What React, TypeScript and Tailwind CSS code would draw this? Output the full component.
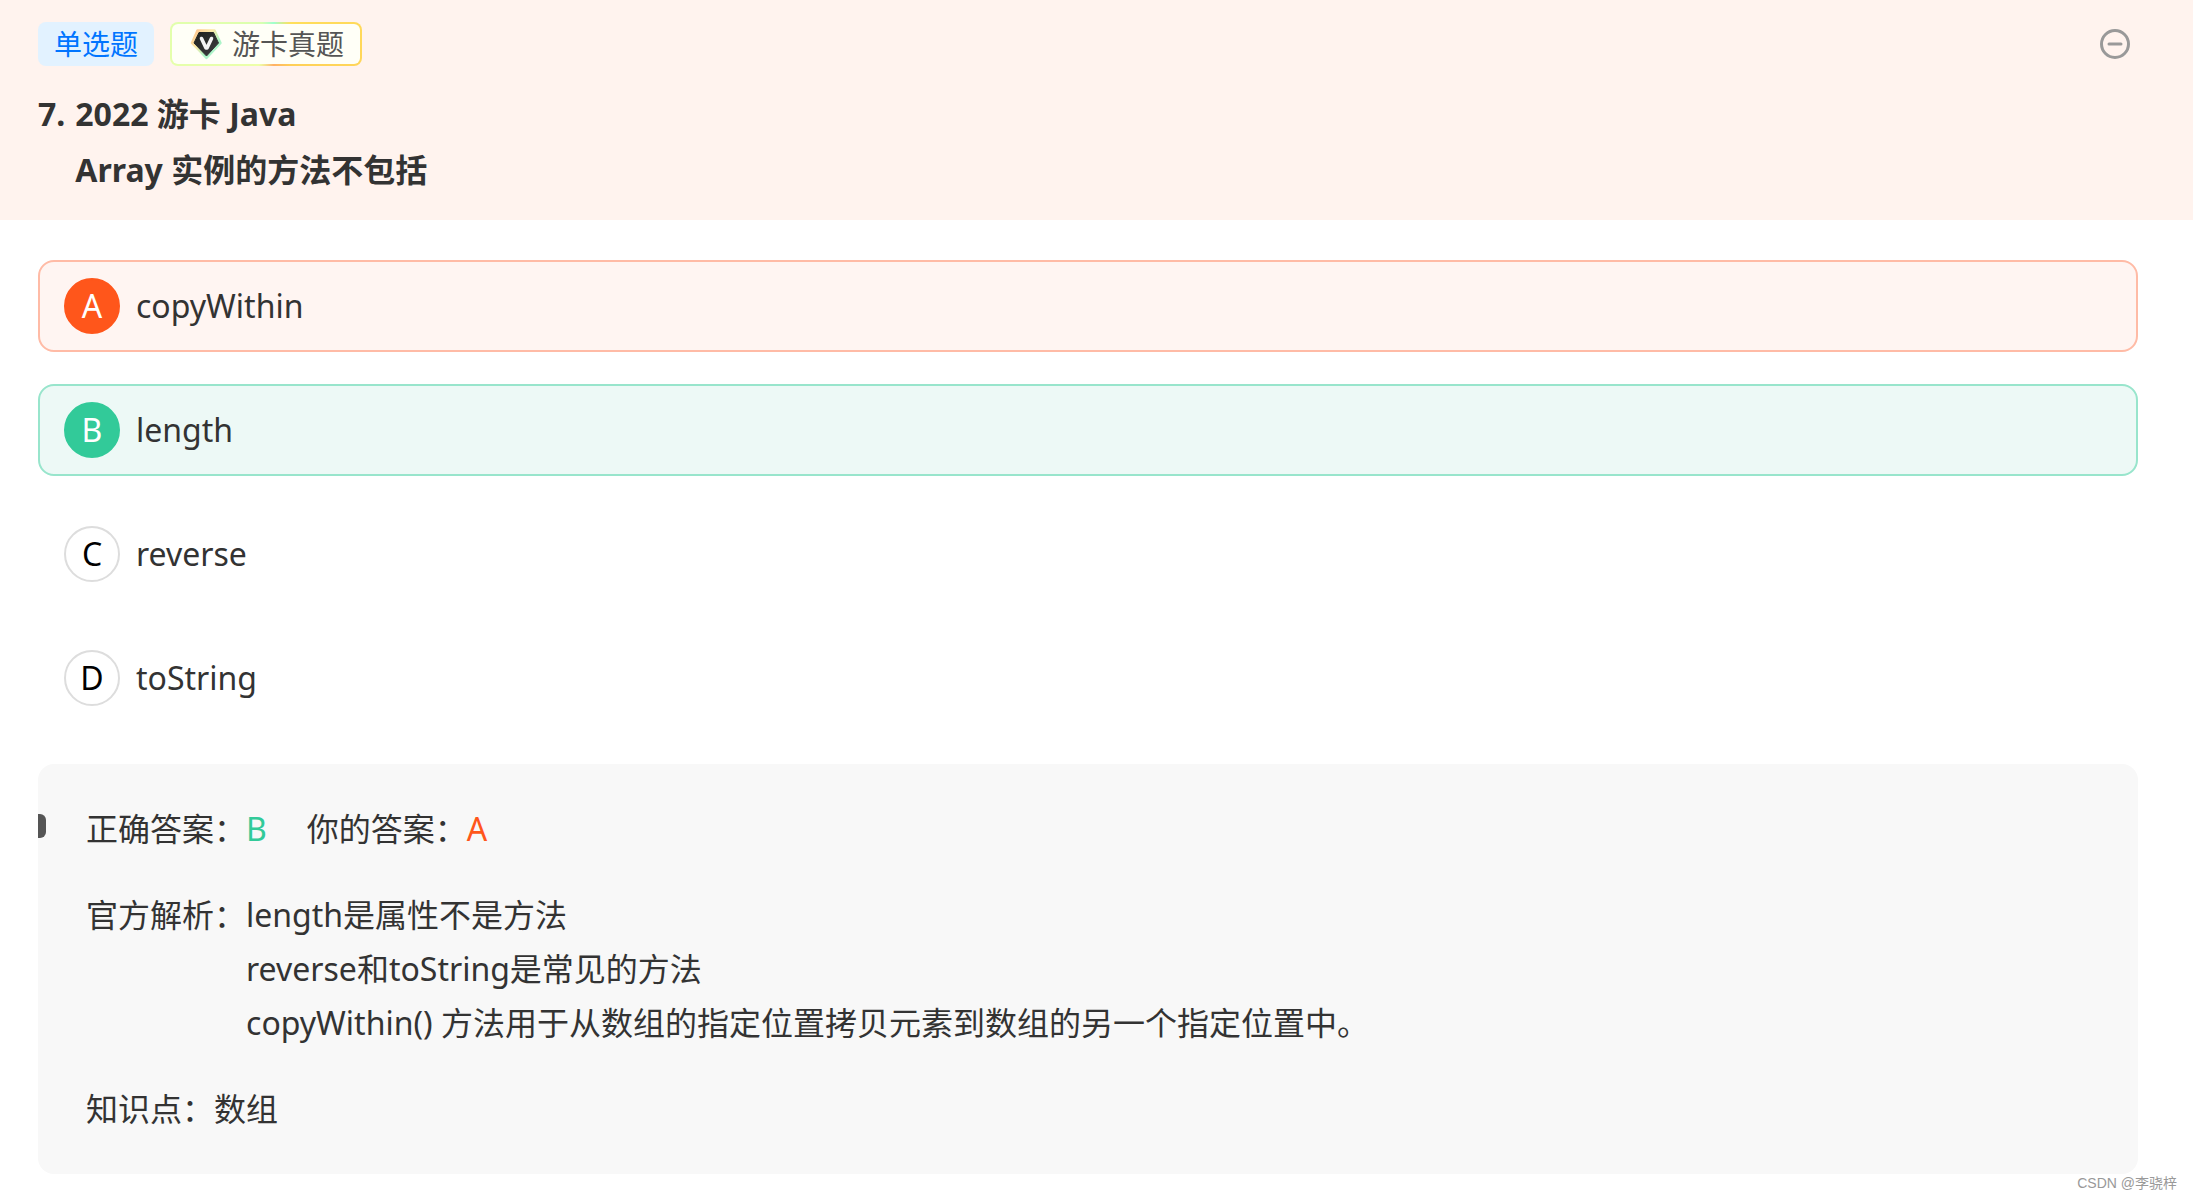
import { useState } from "react";

type Option = {
  key: string;
  text: string;
  row: string;
  badge: string;
};

const options: Option[] = [
  {
    key: "A",
    text: "copyWithin",
    row: "border-[#ffbba6] bg-[#fff5f2]",
    badge: "border-[#ff561b] bg-[#ff561b] text-white",
  },
  {
    key: "B",
    text: "length",
    row: "border-[#98e5cc] bg-[#edf9f6]",
    badge: "border-[#32ca99] bg-[#32ca99] text-white",
  },
  {
    key: "C",
    text: "reverse",
    row: "border-transparent",
    badge: "border-[#dddddd] bg-white text-black",
  },
  {
    key: "D",
    text: "toString",
    row: "border-transparent",
    badge: "border-[#dddddd] bg-white text-black",
  },
];

const explanation = [
  "length是属性不是方法",
  "reverse和toString是常见的方法",
  "copyWithin() 方法用于从数组的指定位置拷贝元素到数组的另一个指定位置中。",
];

function GemIcon() {
  return (
    <svg className="size-8" viewBox="0 0 32 32" fill="none" aria-hidden="true">
      <defs>
        <linearGradient id="gemEdge" x1="4" y1="4" x2="28" y2="28" gradientUnits="userSpaceOnUse">
          <stop offset="0" stopColor="#ffc890" />
          <stop offset="0.35" stopColor="#fbe9a8" />
          <stop offset="0.7" stopColor="#a9f5c4" />
          <stop offset="1" stopColor="#b8f3d8" />
        </linearGradient>
        <linearGradient id="gemBody" x1="6" y1="4" x2="26" y2="28" gradientUnits="userSpaceOnUse">
          <stop offset="0" stopColor="#20221f" />
          <stop offset="1" stopColor="#3b3c3f" />
        </linearGradient>
      </defs>
      <path d="M7.500 2.500h17l6 12.500L16.500 30 2 15z" fill="url(#gemEdge)" stroke="url(#gemEdge)" strokeWidth="2.500" strokeLinejoin="round" />
      <path d="M9 4.500h14.500l5 10.500L16.500 28 4 15z" fill="url(#gemBody)" stroke="url(#gemBody)" strokeLinejoin="round" />
      <path d="M11.500 10.500l4.500 9.500h1L21.500 10.500" stroke="#f4f4f4" strokeWidth="3.600" strokeLinecap="round" strokeLinejoin="round" />
    </svg>
  );
}

function MinusCircle() {
  return (
    <svg className="size-8" viewBox="0 0 32 32" fill="none" stroke="#999999" aria-hidden="true">
      <circle cx="16" cy="16" r="13.500" strokeWidth="3" />
      <path d="M10 16h12" strokeWidth="3" strokeLinecap="round" />
    </svg>
  );
}

export default function App() {
  const [open, setOpen] = useState(true);

  return (
    <main className="relative min-h-screen bg-white pb-6 font-['Noto_Sans','Noto_Sans_CJK_SC',sans-serif] text-[32px] text-[#333333]">
      <header className="bg-[#fff3ee] px-[38px] py-[22px]">
        <div className="flex items-center gap-4 text-[28px] leading-10">
          <span className="flex h-11 items-center rounded-lg bg-[#e2f2ff] px-4 text-[#0075ff]">单选题</span>
          <span className="rounded-lg bg-[conic-gradient(at_54%_50%,#9fffd0_0deg,#ffe05c_40deg,#ffcf57_140deg,#ffb066_180deg,#eeffa8_215deg,#d8ffb0_330deg,#9fffd0_360deg)] p-0.5">
            <span className="flex h-10 items-center gap-2.5 rounded-md bg-[#fffff7] pr-4 pl-[18px] text-[#555555]">
              <GemIcon />
              游卡真题
            </span>
          </span>
          <button
            type="button"
            aria-label="收起"
            aria-expanded={open}
            onClick={() => setOpen(!open)}
            className="mr-6 ml-auto"
          >
            <MinusCircle />
          </button>
        </div>
        <h1 className="mt-5 flex gap-2.5 leading-[56px] font-bold">
          <span>7.</span>
          <span>
            2022 游卡 Java
            <br />
            Array 实例的方法不包括
          </span>
        </h1>
      </header>

      {open && (
        <div className="mr-[55px] ml-[38px]">
          <fieldset aria-label="Array 实例的方法不包括" className="flex flex-col gap-8 pt-10">
            {options.map((o) => (
              <label
                key={o.key}
                className={`relative flex h-[92px] items-center gap-4 rounded-2xl border-2 px-6 ${o.row}`}
              >
                <input type="radio" name="answer" value={o.key} defaultChecked={o.key === "A"} className="sr-only" />
                <span className={`flex size-14 items-center justify-center rounded-full border-2 ${o.badge}`}>
                  {o.key}
                </span>
                <span>{o.text}</span>
              </label>
            ))}
          </fieldset>

          <section className="relative mt-10 flex flex-col gap-8 rounded-2xl bg-[#f8f8f8] px-12 py-[38px] leading-[54px]">
            <span className="absolute top-[50px] left-0 h-6 w-2 rounded-r-md bg-[#555555]" />
            <p className="flex gap-10">
              <span>
                正确答案：<span className="text-[#32ca99]">B</span>
              </span>
              <span>
                你的答案：<span className="text-[#ff561b]">A</span>
              </span>
            </p>
            <div className="flex">
              <span className="shrink-0">官方解析：</span>
              <div>
                {explanation.map((line) => (
                  <p key={line}>{line}</p>
                ))}
              </div>
            </div>
            <p>知识点：数组</p>
          </section>
        </div>
      )}

      <footer className="absolute right-4 bottom-2 font-['Liberation_Sans','Noto_Sans_CJK_SC',sans-serif] text-sm text-[#999999]">
        CSDN @李骁梓
      </footer>
    </main>
  );
}
